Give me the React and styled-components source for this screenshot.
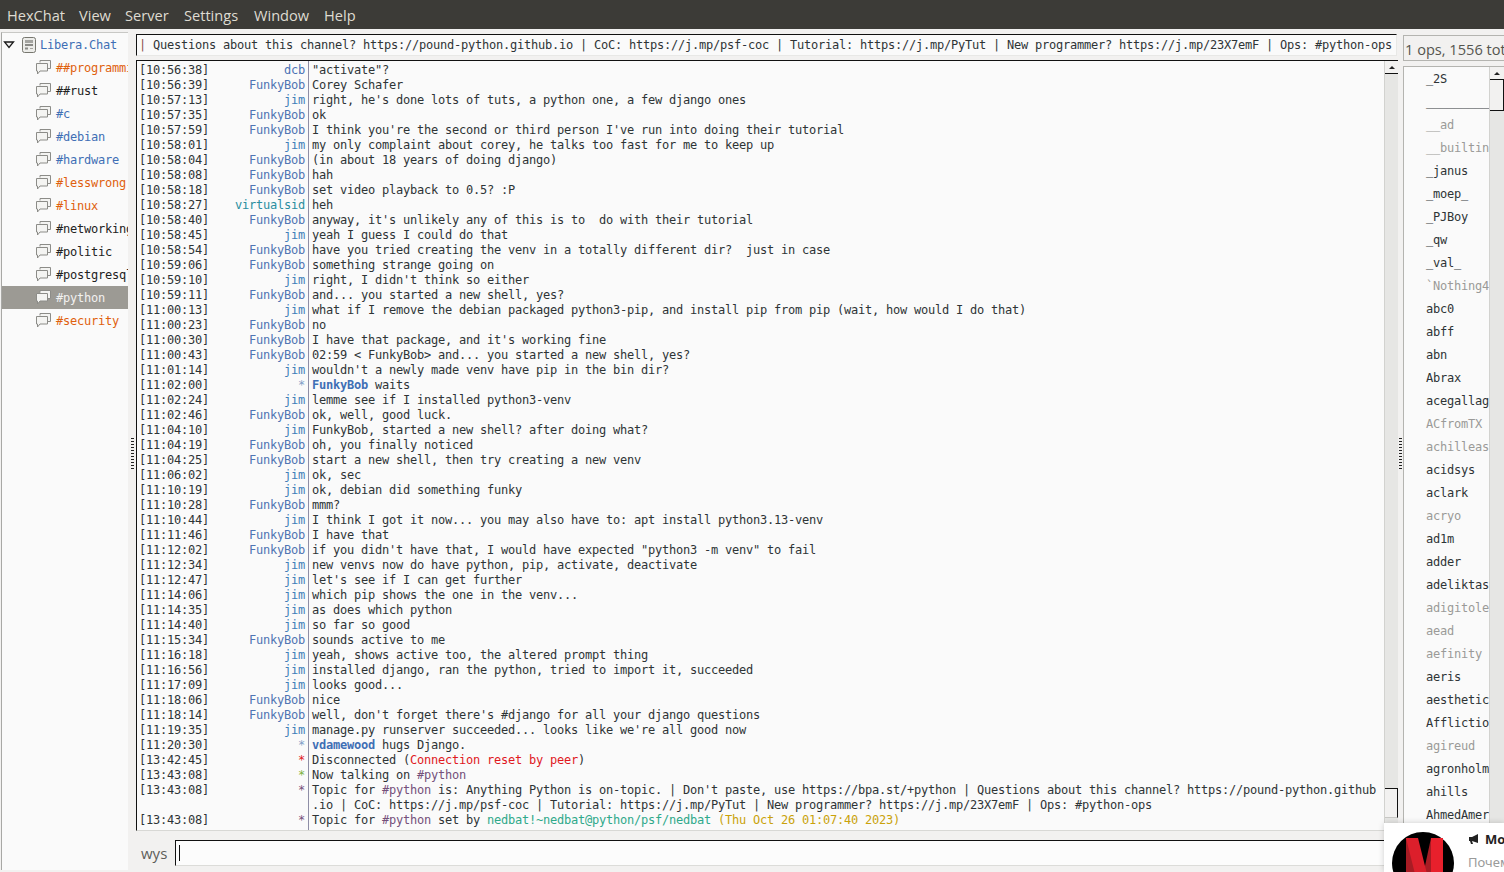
import React from "react";
import styled, { createGlobalStyle } from "styled-components";

const Global = createGlobalStyle`
  html, body { margin: 0; padding: 0; height: 100%; overflow: hidden; background: #f2f1f0; }
  #root { height: 100%; }
`;

const MONO = `"DejaVu Sans Mono", monospace`;
const UI = `"Open Sans", "Noto Sans", sans-serif`;
const TIGHT = "-0.224px";

const Window = styled.div`
  position: relative;
  width: 1504px;
  height: 872px;
  display: flex;
  flex-direction: column;
  overflow: hidden;
  background: #f2f1f0;
`;

const MenuBar = styled.div`
  height: 29px;
  flex: none;
  display: flex;
  align-items: center;
  padding-left: 7px;
  background: #3c3b37;
  color: #dfdbd2;
  font: 14.6px ${UI};
`;

const MenuItem = styled.span`
  width: ${(p) => p.$width}px;
  flex: none;
`;

const Main = styled.div`
  flex: 1;
  display: flex;
  min-height: 0;
`;

const Tree = styled.div`
  width: 127px;
  flex: none;
  margin: 3px 0 2px 1px;
  box-sizing: border-box;
  border-left: 1px solid #a8a8a5;
  border-top: 1px solid #c8c8c5;
  background: #fafafa;
  overflow: hidden;
  font: 12px ${MONO};
  letter-spacing: ${TIGHT};
`;

const TreeRow = styled.div`
  height: 23px;
  display: flex;
  align-items: center;
  overflow: hidden;
  padding-left: ${(p) => (p.$server ? "1px" : "33px")};
  gap: ${(p) => (p.$server ? "0" : "4px")};
  background: ${(p) => (p.$active ? "#9c9a94" : "transparent")};
  color: ${(p) => (p.$active ? "#f2f1f0" : p.$color)};
  white-space: pre;
`;

const Gutter = styled.div`
  flex: none;
  width: ${(p) => p.$width}px;
  display: flex;
  align-items: flex-start;
  justify-content: center;
  padding-top: 408px;
  box-sizing: border-box;
`;

const Grip = styled.div`
  width: 3px;
  height: 33px;
  background-image: radial-gradient(circle, #222 0.9px, transparent 1px);
  background-size: 2px 3px;
`;

const Center = styled.div`
  width: 1262px;
  flex: none;
  display: flex;
  flex-direction: column;
  padding-top: 5px;
  box-sizing: border-box;
`;

const TopicBar = styled.div`
  height: 22px;
  flex: none;
  box-sizing: border-box;
  margin-right: 1px;
  padding-left: 2px;
  border-top: 1px solid #111;
  border-left: 1px solid #111;
  border-right: 1px solid #e8e8e6;
  border-bottom: 1px solid #e8e8e6;
  background: #fafafa;
  color: #2e3436;
  font: 12px/21px ${MONO};
  letter-spacing: ${TIGHT};
  white-space: pre;
  overflow: hidden;
`;

const Chat = styled.div`
  height: 771px;
  flex: none;
  margin-top: 4px;
  display: flex;
  box-sizing: border-box;
  border-top: 1px solid #111;
  border-left: 1px solid #111;
  border-bottom: 1px solid #d8d8d5;
  background: #fafafa;
`;

const Log = styled.div`
  position: relative;
  flex: 1;
  padding-top: 2px;
  overflow: hidden;
  color: #2e3436;
  font: 12px/15px ${MONO};
  letter-spacing: ${TIGHT};
  &::before {
    content: "";
    position: absolute;
    left: 171px;
    top: 0;
    bottom: 0;
    width: 1px;
    background: #8e8ea6;
  }
`;

const Row = styled.div`
  display: grid;
  grid-template-columns: 70px 96px 1076px;
  padding-left: 2px;
`;

const Time = styled.span`
  white-space: pre;
`;

const Nick = styled.span`
  text-align: right;
  white-space: pre;
  color: ${(p) => p.$color};
`;

const Msg = styled.span`
  padding-left: 7px;
  box-sizing: border-box;
  white-space: pre-wrap;
  line-break: anywhere;
`;

const Tint = styled.span`
  color: ${(p) => p.$color};
  font-weight: ${(p) => (p.$bold ? 700 : 400)};
`;

const Scrollbar = styled.div`
  width: ${(p) => p.$width}px;
  flex: none;
  display: flex;
  flex-direction: column;
  background: #e6e6e4;
  border-left: 1px solid #d2d2cf;
  box-sizing: border-box;
`;

const ScrollButton = styled.div`
  height: 13px;
  flex: none;
  display: flex;
  align-items: center;
  justify-content: center;
  background: #f2f1f0;
  border-bottom: 1px solid #111;
  box-sizing: border-box;
  &::after {
    content: "";
    border-left: 3px solid transparent;
    border-right: 3px solid transparent;
    border-bottom: 3px solid #222;
  }
`;

const ScrollThumb = styled.div`
  height: ${(p) => p.$height}px;
  flex: none;
  margin-top: ${(p) => p.$top}px;
  background: #f2f1f0;
  border-right: 1px solid #111;
  border-bottom: ${(p) => (p.$edge ? "1px solid #111" : "1px solid #c8c8c5")};
  border-top: ${(p) => (p.$edge ? "0" : "1px solid #111")};
  box-sizing: border-box;
`;

const InputRow = styled.div`
  flex: 1;
  display: flex;
  align-items: flex-start;
  padding: 9px 0 0 5px;
  gap: 6px;
`;

const NickLabel = styled.div`
  width: 28px;
  color: #5e5e5a;
  font: 15px/27px ${UI};
`;

const Input = styled.div`
  flex: 1;
  height: 24px;
  display: flex;
  align-items: center;
  padding-left: 3px;
  background: #fcfcfc;
  border-top: 1px solid #111;
  border-left: 1px solid #111;
  border-bottom: 1px solid #dcdcd9;
`;

const Caret = styled.span`
  width: 1px;
  height: 16px;
  background: #111;
`;

const Side = styled.div`
  flex: 1;
  min-width: 0;
  display: flex;
  flex-direction: column;
  padding-top: 6px;
`;

const Count = styled.div`
  height: 26px;
  flex: none;
  box-sizing: border-box;
  border: 1px solid #b4b4b0;
  border-right: none;
  background: #f2f1f0;
  color: #55554f;
  font: 14.6px/27px ${UI};
  padding-left: 1px;
  white-space: pre;
  overflow: hidden;
`;

const UserPane = styled.div`
  flex: 1;
  min-height: 0;
  margin-top: 5px;
  display: flex;
  box-sizing: border-box;
  border-left: 1px solid #b4b4b0;
  border-top: 1px solid #b4b4b0;
  background: #fafafa;
`;

const UserList = styled.div`
  flex: 1;
  min-width: 0;
  padding-top: 1px;
  overflow: hidden;
  font: 12px/23px ${MONO};
  letter-spacing: ${TIGHT};
`;

const User = styled.div`
  height: 23px;
  padding-left: 22px;
  white-space: pre;
  overflow: hidden;
  color: ${(p) => (p.$away ? "#9a9a98" : "#2e3436")};
`;

const Notice = styled.div`
  position: absolute;
  left: 1384px;
  top: 823px;
  width: 120px;
  height: 49px;
  display: flex;
  background: #fff;
  box-shadow: 0 0 6px rgba(0, 0, 0, 0.18);
  overflow: hidden;
  font-family: "Noto Sans", sans-serif;
`;

const Avatar = styled.svg`
  flex: none;
  width: 62px;
  height: 62px;
  margin: 9px 0 0 8px;
`;

const NoticeBody = styled.div`
  padding: 8px 0 0 14px;
  white-space: pre;
`;

const NoticeTitle = styled.div`
  display: flex;
  align-items: center;
  gap: 5px;
  color: #222;
  font-size: 13px;
  font-weight: 700;
  line-height: 16px;
`;

const NoticeText = styled.div`
  margin-top: 7px;
  color: #9a9a9a;
  font-size: 13px;
  line-height: 16px;
`;

const C = {
  bob: "#4f74b3",
  jim: "#3f7fb8",
  dcb: "#4a72b5",
  vs: "#2a8ea0",
  orange: "#e0610e",
  blue: "#3f6fb5",
  dark: "#2e3436",
  purple: "#75507b",
  green: "#2fa98a",
  yellow: "#c9a20a",
  red: "#e0181e",
  star: "#7f9fc8",
};

function ExpanderIcon() {
  return (
    <svg width="12" height="8" viewBox="0 0 12 8" style={{ flex: "none", marginRight: 7 }}>
      <path d="M1.5 1 H10.5 L6 6.5 Z" fill="#f2f1f0" stroke="#1a1a1a" strokeWidth="1.3" />
    </svg>
  );
}

function BubbleIcon() {
  return (
    <svg width="17" height="17" viewBox="0 0 17 17" style={{ flex: "none" }}>
      <path d="M5 3.5 V1.5 H15.5 V9.5 H13" fill="#f4f4f2" stroke="#8c8c88" strokeWidth="1" />
      <path d="M1.5 4.5 H12.5 V12 H5 L2.5 15 V12 H1.5 Z" fill="#f4f4f2" stroke="#8c8c88" strokeWidth="1" />
    </svg>
  );
}

function ServerIcon() {
  return (
    <svg width="14" height="16" viewBox="0 0 14 16" style={{ flex: "none", marginRight: 4 }}>
      <rect x="0.5" y="0.5" width="13" height="15" rx="2" fill="#ecece9" stroke="#77776f" />
      <rect x="3" y="3" width="8" height="3" fill="#a4a4a0" />
      <rect x="3" y="7" width="8" height="2" fill="#8a8a86" />
      <rect x="3" y="10.5" width="3" height="2" fill="#8a8a86" />
      <rect x="8" y="11" width="3" height="1" fill="#a4a4a0" />
    </svg>
  );
}

function Megaphone() {
  return (
    <svg width="12" height="12" viewBox="0 0 12 12">
      <path d="M1 4 H4 L10 1 V10 L4 8 L5 11 H3 L2 8 H1 Z" fill="#222" />
    </svg>
  );
}

const menus = [
  ["HexChat", 72],
  ["View", 46],
  ["Server", 59],
  ["Settings", 70],
  ["Window", 70],
  ["Help", 40],
];

const channels = [
  ["##programming", C.orange],
  ["##rust", "#222"],
  ["#c", C.blue],
  ["#debian", C.blue],
  ["#hardware", C.blue],
  ["#lesswrong", C.orange],
  ["#linux", C.orange],
  ["#networking", "#222"],
  ["#politic", "#222"],
  ["#postgresql", "#222"],
  ["#python", "#fff", true],
  ["#security", C.orange],
];

const B = "FunkyBob";
const J = "jim";

const lines = [
  ["10:56:38", "dcb", `"activate"?`, C.dcb],
  ["10:56:39", B, "Corey Schafer"],
  ["10:57:13", J, "right, he's done lots of tuts, a python one, a few django ones"],
  ["10:57:35", B, "ok"],
  ["10:57:59", B, "I think you're the second or third person I've run into doing their tutorial"],
  ["10:58:01", J, "my only complaint about corey, he talks too fast for me to keep up"],
  ["10:58:04", B, "(in about 18 years of doing django)"],
  ["10:58:08", B, "hah"],
  ["10:58:18", B, "set video playback to 0.5? :P"],
  ["10:58:27", "virtualsid", "heh", C.vs],
  ["10:58:40", B, "anyway, it's unlikely any of this is to  do with their tutorial"],
  ["10:58:45", J, "yeah I guess I could do that"],
  ["10:58:54", B, "have you tried creating the venv in a totally different dir?  just in case"],
  ["10:59:06", B, "something strange going on"],
  ["10:59:10", J, "right, I didn't think so either"],
  ["10:59:11", B, "and... you started a new shell, yes?"],
  ["11:00:13", J, "what if I remove the debian packaged python3-pip, and install pip from pip (wait, how would I do that)"],
  ["11:00:23", B, "no"],
  ["11:00:30", B, "I have that package, and it's working fine"],
  ["11:00:43", B, "02:59 < FunkyBob> and... you started a new shell, yes?"],
  ["11:01:14", J, "wouldn't a newly made venv have pip in the bin dir?"],
  ["11:02:00", "*", <><Tint $color={C.blue} $bold>FunkyBob</Tint> waits</>, C.star],
  ["11:02:24", J, "lemme see if I installed python3-venv"],
  ["11:02:46", B, "ok, well, good luck."],
  ["11:04:10", J, "FunkyBob, started a new shell? after doing what?"],
  ["11:04:19", B, "oh, you finally noticed"],
  ["11:04:25", B, "start a new shell, then try creating a new venv"],
  ["11:06:02", J, "ok, sec"],
  ["11:10:19", J, "ok, debian did something funky"],
  ["11:10:28", B, "mmm?"],
  ["11:10:44", J, "I think I got it now... you may also have to: apt install python3.13-venv"],
  ["11:11:46", B, "I have that"],
  ["11:12:02", B, `if you didn't have that, I would have expected "python3 -m venv" to fail`],
  ["11:12:34", J, "new venvs now do have python, pip, activate, deactivate"],
  ["11:12:47", J, "let's see if I can get further"],
  ["11:14:06", J, "which pip shows the one in the venv..."],
  ["11:14:35", J, "as does which python"],
  ["11:14:40", J, "so far so good"],
  ["11:15:34", B, "sounds active to me"],
  ["11:16:18", J, "yeah, shows active too, the altered prompt thing"],
  ["11:16:56", J, "installed django, ran the python, tried to import it, succeeded"],
  ["11:17:09", J, "looks good..."],
  ["11:18:06", B, "nice"],
  ["11:18:14", B, "well, don't forget there's #django for all your django questions"],
  ["11:19:35", J, "manage.py runserver succeeded... looks like we're all good now"],
  ["11:20:30", "*", <><Tint $color={C.blue} $bold>vdamewood</Tint> hugs Django.</>, C.star],
  ["13:42:45", "*", <>Disconnected (<Tint $color={C.red}>Connection reset by peer</Tint>)</>, C.red],
  ["13:43:08", "*", <>Now talking on <Tint $color={C.purple}>#python</Tint></>, "#7cb342"],
  ["13:43:08", "*", <>Topic for <Tint $color={C.purple}>#python</Tint> is: Anything Python is on-topic. | Don't paste, use https://bpa.st/+python | Questions about this channel? https://pound-python.github.io | CoC: https://j.mp/psf-coc | Tutorial: https://j.mp/PyTut | New programmer? https://j.mp/23X7emF | Ops: #python-ops</>, C.purple],
  ["13:43:08", "*", <>Topic for <Tint $color={C.purple}>#python</Tint> set by <Tint $color={C.green}>nedbat!~nedbat@python/psf/nedbat</Tint> <Tint $color={C.yellow}>(Thu Oct 26 01:07:40 2023)</Tint></>, C.purple],
];

const users = [
  ["_2S"], ["__________"], ["__ad", 1], ["__builtin", 1], ["_janus"], ["_moep_"], ["_PJBoy"], ["_qw"], ["_val_"],
  ["`Nothing4", 1], ["abc0"], ["abff"], ["abn"], ["Abrax"], ["acegallag"], ["ACfromTX", 1], ["achilleas", 1],
  ["acidsys"], ["aclark"], ["acryo", 1], ["ad1m"], ["adder"], ["adeliktas"], ["adigitole", 1], ["aead", 1],
  ["aefinity", 1], ["aeris"], ["aesthetic"], ["Afflictio"], ["agireud", 1], ["agronholm"], ["ahills"], ["AhmedAmer"],
];

export default function App() {
  return (
    <Window>
      <Global />
      <MenuBar>
        {menus.map(([m, w]) => (
          <MenuItem key={m} $width={w}>{m}</MenuItem>
        ))}
      </MenuBar>
      <Main>
        <Tree>
          <TreeRow $server $color={C.blue}>
            <ExpanderIcon />
            <ServerIcon />
            Libera.Chat
          </TreeRow>
          {channels.map(([name, color, active]) => (
            <TreeRow key={name} $color={color} $active={active}>
              <BubbleIcon />
              {name}
            </TreeRow>
          ))}
        </Tree>
        <Gutter $width={8}>
          <Grip />
        </Gutter>
        <Center>
          <TopicBar>
            <Tint $color="#8a4a4a">|</Tint> Questions about this channel? https://pound-python.github.io | CoC: https://j.mp/psf-coc | Tutorial: https://j.mp/PyTut | New programmer? https://j.mp/23X7emF | Ops: #python-ops
          </TopicBar>
          <Chat>
            <Log>
              {lines.map(([time, nick, msg, color], i) => (
                <Row key={i}>
                  <Time>[{time}]</Time>
                  <Nick $color={color || (nick === J ? C.jim : C.bob)}>{nick}</Nick>
                  <Msg>{msg}</Msg>
                </Row>
              ))}
            </Log>
            <Scrollbar $width={14}>
              <ScrollButton />
              <ScrollThumb $top={714} $height={30} />
            </Scrollbar>
          </Chat>
          <InputRow>
            <NickLabel>wys</NickLabel>
            <Input>
              <Caret />
            </Input>
          </InputRow>
        </Center>
        <Gutter $width={5}>
          <Grip />
        </Gutter>
        <Side>
          <Count>1 ops, 1556 total</Count>
          <UserPane>
            <UserList>
              {users.map(([name, away]) => (
                <User key={name} $away={away}>{name}</User>
              ))}
            </UserList>
            <Scrollbar $width={15}>
              <ScrollButton />
              <ScrollThumb $top={0} $height={31} $edge />
            </Scrollbar>
          </UserPane>
        </Side>
      </Main>
      <Notice>
        <Avatar viewBox="0 0 62 62">
          <circle cx="31" cy="31" r="31" fill="#000" />
          <path d="M14 6 H23 V62 H14 Z" fill="#a81c24" />
          <path d="M39 6 H48 L38 62 H27 Z" fill="#a81c24" />
          <path d="M14 6 H26 L40 62 H28 Z" fill="#dc1f2b" />
          <path d="M39 6 H51 V62 H39 Z" fill="#e8202c" />
        </Avatar>
        <NoticeBody>
          <NoticeTitle>
            <Megaphone />
            Мо
          </NoticeTitle>
          <NoticeText>Почем</NoticeText>
        </NoticeBody>
      </Notice>
    </Window>
  );
}
